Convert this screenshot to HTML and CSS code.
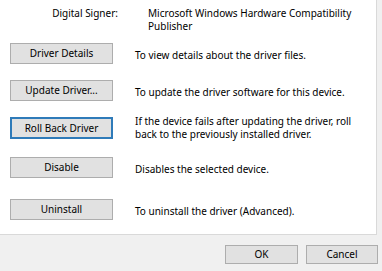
FILE: index.html
```html
<!DOCTYPE html>
<html>
<head>
<meta charset="utf-8">
<link rel="stylesheet" href="styles.css">
</head>
<body>
<div class="panel">
  <div class="signer">
    <div class="signer-label">Digital Signer:</div>
    <div class="signer-value">Microsoft Windows Hardware Compatibility Publisher</div>
  </div>
  <div class="actions">
    <div class="row">
      <button class="btn">Driver Details</button>
      <div class="desc">To view details about the driver files.</div>
    </div>
    <div class="row">
      <button class="btn">Update Driver...</button>
      <div class="desc">To update the driver software for this device.</div>
    </div>
    <div class="row">
      <button class="btn btn-focus">Roll Back Driver</button>
      <div class="desc desc-two">If the device fails after updating the driver, roll back to the previously installed driver.</div>
    </div>
    <div class="row row-wide">
      <button class="btn">Disable</button>
      <div class="desc">Disables the selected device.</div>
    </div>
    <div class="row">
      <button class="btn">Uninstall</button>
      <div class="desc">To uninstall the driver (Advanced).</div>
    </div>
  </div>
</div>
<div class="footer">
  <button class="btn btn-dlg">OK</button>
  <button class="btn btn-dlg btn-cancel">Cancel</button>
</div>
</body>
</html>
```
FILE: styles.css
```css
html, body {
  margin: 0;
  padding: 0;
  background: #f0f0f0;
  font-family: "Noto Sans", "Open Sans", sans-serif;
  font-size: 10px;
  line-height: 13px;
  color: #000;
}

.panel {
  width: 376px;
  height: 234px;
  background: #fff;
  border-right: 1px solid #d9d9d9;
  border-bottom: 1px solid #d9d9d9;
  box-sizing: content-box;
  display: flex;
  flex-direction: column;
}

.signer {
  display: flex;
  padding-top: 7px;
}

.signer-label {
  width: 118px;
  text-align: right;
}

.signer-value {
  margin-left: 30px;
  width: 215px;
}

.actions {
  display: flex;
  flex-direction: column;
  margin-top: 10px;
  padding-left: 10px;
}

.row {
  display: flex;
  align-items: flex-start;
  margin-bottom: 16px;
}

.row-wide {
  margin-bottom: 21px;
}

.btn {
  font-family: inherit;
  font-size: 10px;
  line-height: 13px;
  color: #000;
  background: #e1e1e1;
  border: 1px solid #adadad;
  border-radius: 0;
  padding: 0;
  margin: 0;
  width: 103px;
  height: 21px;
  flex-shrink: 0;
}

.btn-focus {
  height: 22px;
  border: 2px solid #2f7bb9;
}

.desc {
  margin-left: 22px;
  padding-top: 6px;
  width: 230px;
}

.desc-two {
  padding-top: 0;
  margin-top: -2px;
}

.footer {
  display: flex;
  justify-content: flex-end;
  gap: 8px;
  padding: 10px 4px 0 0;
}

.btn-dlg {
  width: 73px;
  height: 19px;
}

.btn-cancel {
  width: 72px;
}
```
